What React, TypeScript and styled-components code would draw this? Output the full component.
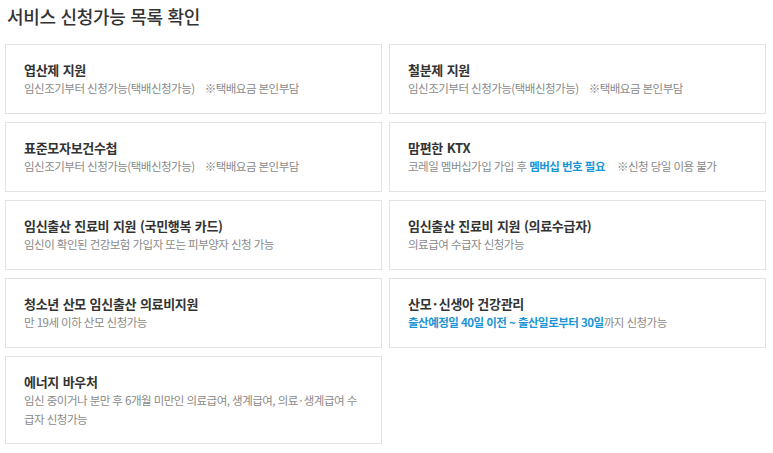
import React from "react";
import styled, { createGlobalStyle } from "styled-components";

const Global = createGlobalStyle`
  html, body { margin: 0; padding: 0; background: #fff; }
  body { font-family: "Noto Sans CJK KR", "Noto Sans", sans-serif; color: #333; }
`;

const Page = styled.div`
  padding: 4px 0 0 5px;
`;

const Heading = styled.h1`
  margin: 0 0 16px 2px;
  font-size: 18px;
  line-height: 24px;
  font-weight: 500;
  letter-spacing: -0.3px;
  word-spacing: 1px;
  color: #333;
`;

const Grid = styled.div`
  display: grid;
  grid-template-columns: 377px 377px;
  column-gap: 7px;
  row-gap: 8px;
  align-items: start;
`;

const Card = styled.div`
  box-sizing: border-box;
  border: 1px solid #e3e3e3;
  padding: 16px 18px 14px 18px;
  min-height: 70px;
`;

const Title = styled.div`
  font-size: 13px;
  line-height: 18px;
  font-weight: 700;
  letter-spacing: -0.3px;
  word-spacing: 1px;
  color: #333;
`;

const Desc = styled.div`
  font-size: 11.5px;
  line-height: 19px;
  letter-spacing: -0.5px;
  word-spacing: 0.5px;
  color: #8a8a8a;
`;

const Strong = styled.b`
  color: #1b95d6;
  font-weight: 700;
`;

const Note = styled.span<{ $gap?: number }>`
  margin-left: ${(p) => p.$gap ?? 10}px;
`;

type Item = { title: string; desc: React.ReactNode };

const items: Item[] = [
  {
    title: "엽산제 지원",
    desc: (
      <>
        임신조기부터 신청가능(택배신청가능)<Note>※택배요금 본인부담</Note>
      </>
    ),
  },
  {
    title: "철분제 지원",
    desc: (
      <>
        임신조기부터 신청가능(택배신청가능)<Note>※택배요금 본인부담</Note>
      </>
    ),
  },
  {
    title: "표준모자보건수첩",
    desc: (
      <>
        임신조기부터 신청가능(택배신청가능)<Note>※택배요금 본인부담</Note>
      </>
    ),
  },
  {
    title: "맘편한 KTX",
    desc: (
      <>
        코레일 멤버십가입 가입 후 <Strong>멤버십 번호 필요</Strong>
        <Note $gap={12}>※신청 당일 이용 불가</Note>
      </>
    ),
  },
  {
    title: "임신출산 진료비 지원 (국민행복 카드)",
    desc: "임신이 확인된 건강보험 가입자 또는 피부양자 신청 가능",
  },
  {
    title: "임신출산 진료비 지원 (의료수급자)",
    desc: "의료급여 수급자 신청가능",
  },
  {
    title: "청소년 산모 임신출산 의료비지원",
    desc: "만 19세 이하 산모 신청가능",
  },
  {
    title: "산모·신생아 건강관리",
    desc: (
      <>
        <Strong>출산예정일 40일 이전 ~ 출산일로부터 30일</Strong>까지 신청가능
      </>
    ),
  },
  {
    title: "에너지 바우처",
    desc: "임신 중이거나 분만 후 6개월 미만인 의료급여, 생계급여, 의료·생계급여 수급자 신청가능",
  },
];

export default function App() {
  return (
    <>
      <Global />
      <Page>
        <Heading>서비스 신청가능 목록 확인</Heading>
        <Grid>
          {items.map((it) => (
            <Card key={it.title}>
              <Title>{it.title}</Title>
              <Desc>{it.desc}</Desc>
            </Card>
          ))}
        </Grid>
      </Page>
    </>
  );
}
